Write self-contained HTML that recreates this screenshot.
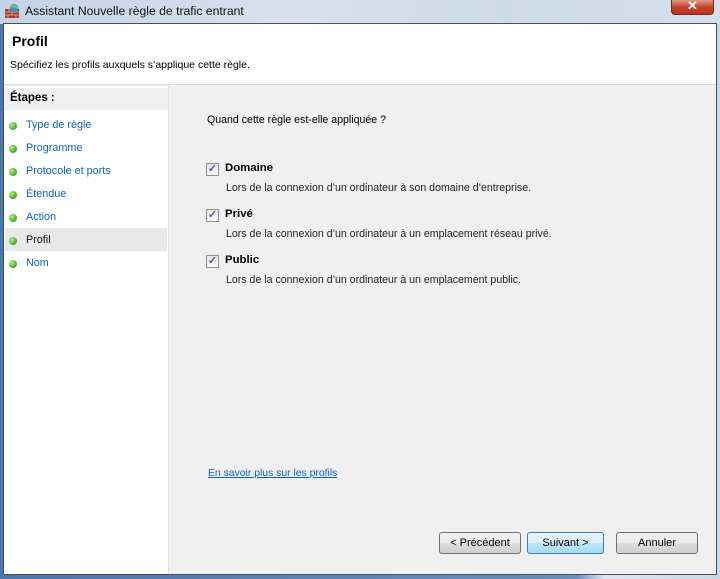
<!DOCTYPE html>
<html><head><meta charset="utf-8"><style>
*{margin:0;padding:0;box-sizing:border-box}
body{width:720px;height:579px;overflow:hidden;background:linear-gradient(90deg,#4f76a8 0,#6a8dbb 80%,#dfe6f0 84%,#cbd8e8 100%);font-family:"Liberation Sans",sans-serif;font-size:11px;position:relative}
.tb{position:absolute;left:0;top:0;width:720px;height:24px;background:linear-gradient(90deg,#c5d3e6,#d8e1ee 40%,#cfdae9 70%,#d6dfec);}
.tt{position:absolute;left:25px;top:4px;font-size:12.2px;color:#111}
.close{position:absolute;left:671px;top:0;width:43px;height:15px;border:1px solid #6d2c22;border-top:none;border-radius:0 0 4px 4px;background:linear-gradient(#e19a85,#c5432c 50%,#b8321c);color:#fff;font-weight:bold;font-size:13px;text-align:center;line-height:12px}
.win{position:absolute;left:3px;top:23px;width:714px;height:552px;border:1px solid #4a4f57;background:#f0f0f0}
.hdr{position:absolute;left:0;top:0;width:712px;height:61px;background:#fff;border-bottom:1px solid #dfdfdf}
.left{position:absolute;left:0;top:62px;width:165px;height:488px;background:#fff;border-right:1px solid #e0e0e0}
.lk{color:#0b62c8}
.st{position:absolute;left:22px;font-size:10.8px;color:#0b62c8}
.dot{position:absolute;left:5px;width:8px;height:8px;border-radius:50%;background:radial-gradient(circle at 35% 35%,#b7f08a,#4cb22a 60%,#2f8a18)}
.cb{position:absolute;left:202px;width:13px;height:13px;border:1px solid #8f8f8f;background:linear-gradient(#e6e6e6,#fafafa);color:#4a5f9a;font-size:11px;font-weight:bold;line-height:11px;text-align:center}
.b{position:absolute;font-weight:bold;font-size:11.4px;left:221px;color:#000}
.d{position:absolute;left:222px;font-size:10.6px;color:#222}
.btn{position:absolute;top:508px;height:22px;border:1px solid #707070;border-radius:3px;background:linear-gradient(#f2f2f2 0,#ebebeb 50%,#dddddd 51%,#cfcfcf);text-align:center;line-height:20px;font-size:11px;color:#000}
</style></head><body>
<div class="tb"></div>
<svg style="position:absolute;left:4px;top:3px" width="16" height="16"><rect x="1" y="6" width="14" height="9" fill="#a0392a"/><path d="M1 9h14M1 12h14M5 6v3M11 6v3M8 9v3M4 12v3M12 12v3" stroke="#e0a080" stroke-width="1"/><circle cx="10" cy="5" r="4" fill="#3a8fd8"/><path d="M7 4q3 -2 6 1" stroke="#6c6" stroke-width="2" fill="none"/></svg>
<div class="tt">Assistant Nouvelle règle de trafic entrant</div>
<div class="close">✕</div>
<div class="win">
<div class="hdr">
<div style="position:absolute;left:8px;top:9px;font-weight:bold;font-size:14px">Profil</div>
<div style="position:absolute;left:6px;top:35px;font-size:10.5px">Spécifiez les profils auxquels s’applique cette règle.</div>
</div>
<div class="left">
<div style="position:absolute;left:0;top:2px;width:164px;height:22px;background:#f0f0f0"></div>
<div style="position:absolute;left:6px;top:6px;font-weight:bold;font-size:11.5px">Étapes :</div>
<div style="position:absolute;left:1px;top:142px;width:162px;height:23px;background:#e8e8e8"></div>
<div class="dot" style="top:36px"></div><div class="st" style="top:33px">Type de règle</div>
<div class="dot" style="top:59px"></div><div class="st" style="top:56px">Programme</div>
<div class="dot" style="top:82px"></div><div class="st" style="top:79px">Protocole et ports</div>
<div class="dot" style="top:105px"></div><div class="st" style="top:102px">Étendue</div>
<div class="dot" style="top:128px"></div><div class="st" style="top:125px">Action</div>
<div class="dot" style="top:151px"></div><div class="st" style="top:148px;color:#111">Profil</div>
<div class="dot" style="top:174px"></div><div class="st" style="top:171px">Nom</div>
</div>
<div style="position:absolute;left:203px;top:90px;font-size:10.6px">Quand cette règle est-elle appliquée ?</div>
<div class="cb" style="top:139px">✓</div><div class="b" style="top:138px">Domaine</div>
<div class="d" style="top:158px">Lors de la connexion d’un ordinateur à son domaine d’entreprise.</div>
<div class="cb" style="top:185px">✓</div><div class="b" style="top:184px">Privé</div>
<div class="d" style="top:204px">Lors de la connexion d’un ordinateur à un emplacement réseau privé.</div>
<div class="cb" style="top:231px">✓</div><div class="b" style="top:230px">Public</div>
<div class="d" style="top:250px">Lors de la connexion d’un ordinateur à un emplacement public.</div>
<div class="lk" style="position:absolute;left:204px;top:444px;font-size:10.4px;text-decoration:underline">En savoir plus sur les profils</div>
<div class="btn" style="left:435px;width:82px">&lt; Précédent</div>
<div class="btn" style="left:523px;width:77px;border-color:#3c7fb1;background:linear-gradient(#eaf6fd,#d9f0fc 50%,#bee6fd 51%,#a7d9f5)">Suivant &gt;</div>
<div class="btn" style="left:612px;width:82px">Annuler</div>
</div>
</body></html>
